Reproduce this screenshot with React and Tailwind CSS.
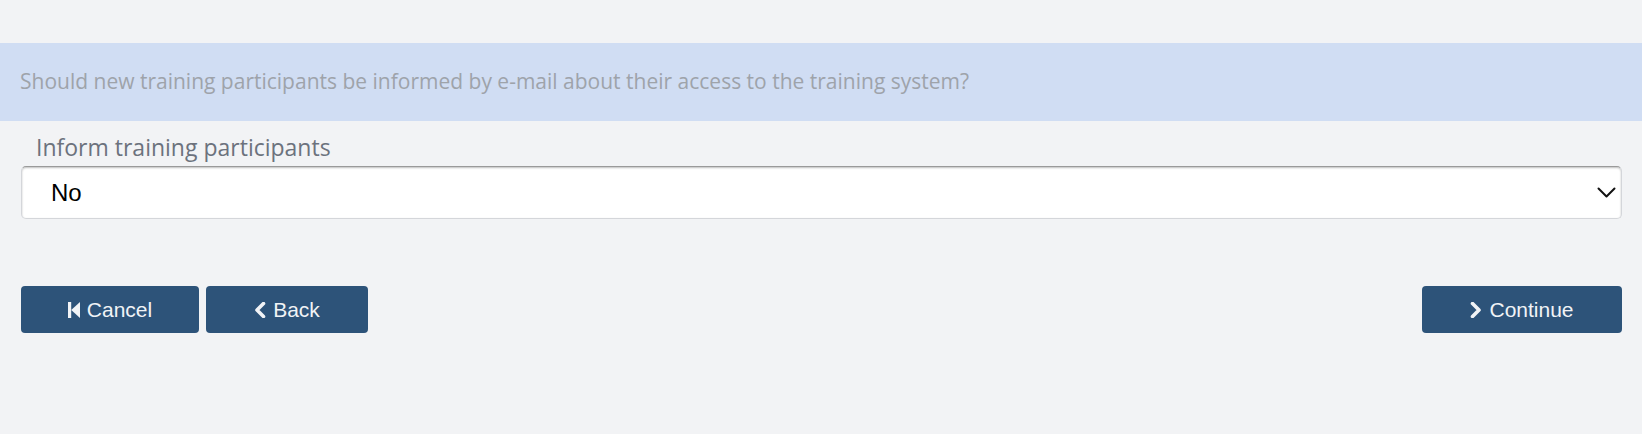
import React from "react";

function StepBack() {
  return (
    <svg width="12" height="16" viewBox="0 0 12 16" className="shrink-0">
      <rect x="0" y="0" width="3.2" height="16" fill="#f1f3f6" />
      <polygon points="3.2,8 12,0 12,16" fill="#f1f3f6" />
    </svg>
  );
}

function ChevLeft() {
  return (
    <svg width="12" height="16" viewBox="0 0 12 16" className="shrink-0">
      <polyline points="9.5,1.5 3,8 9.5,14.5" fill="none" stroke="#f1f3f6" strokeWidth="3.6" strokeLinecap="round" strokeLinejoin="round" />
    </svg>
  );
}

function ChevRight() {
  return (
    <svg width="12" height="16" viewBox="0 0 12 16" className="shrink-0">
      <polyline points="2.5,1.5 9,8 2.5,14.5" fill="none" stroke="#f1f3f6" strokeWidth="3.6" strokeLinecap="round" strokeLinejoin="round" />
    </svg>
  );
}

function Btn({ w, icon, children }) {
  return (
    <button
      className={`${w} h-[47px] rounded-[4px] bg-[#2d5379] text-[#f1f3f6] text-[21px] flex items-center justify-center gap-[7px] font-['Liberation_Sans',Arial,sans-serif]`}
    >
      {icon}
      <span>{children}</span>
    </button>
  );
}

export default function App() {
  return (
    <div className="min-h-[434px] bg-[#f2f3f5] pt-[43px] font-['Open_Sans',sans-serif]">
      <div className="h-[78px] bg-[#d0ddf3] flex items-center pl-[20px] text-[21px] text-[#9ea3aa]">
        Should new training participants be informed by e-mail about their access to the training system?
      </div>
      <div className="pl-[21px] pr-[20px]">
        <div className="mt-[11px] pl-[15px] text-[23px] leading-[31px] text-[#6c727d]">
          Inform training participants
        </div>
        <div className="mt-[3px] h-[53px] bg-white rounded-[5px] border border-[#d4d6da] border-t-[#9a9a9a] shadow-[inset_0_1px_2px_rgba(0,0,0,0.25)] flex items-center justify-between pl-[29px] pr-[5px]">
          <span className="text-[24px] text-black font-['Liberation_Sans',Arial,sans-serif]">No</span>
          <svg width="19" height="11" viewBox="0 0 19 11">
            <polyline points="1.5,1.5 9.5,9.5 17.5,1.5" fill="none" stroke="#111" strokeWidth="2" strokeLinecap="round" strokeLinejoin="round" />
          </svg>
        </div>
        <div className="mt-[67px] flex items-center justify-between">
          <div className="flex gap-[7px]">
            <Btn w="w-[178px]" icon={<StepBack />}>Cancel</Btn>
            <Btn w="w-[162px]" icon={<ChevLeft />}>Back</Btn>
          </div>
          <Btn w="w-[200px]" icon={<ChevRight />}>Continue</Btn>
        </div>
      </div>
    </div>
  );
}
